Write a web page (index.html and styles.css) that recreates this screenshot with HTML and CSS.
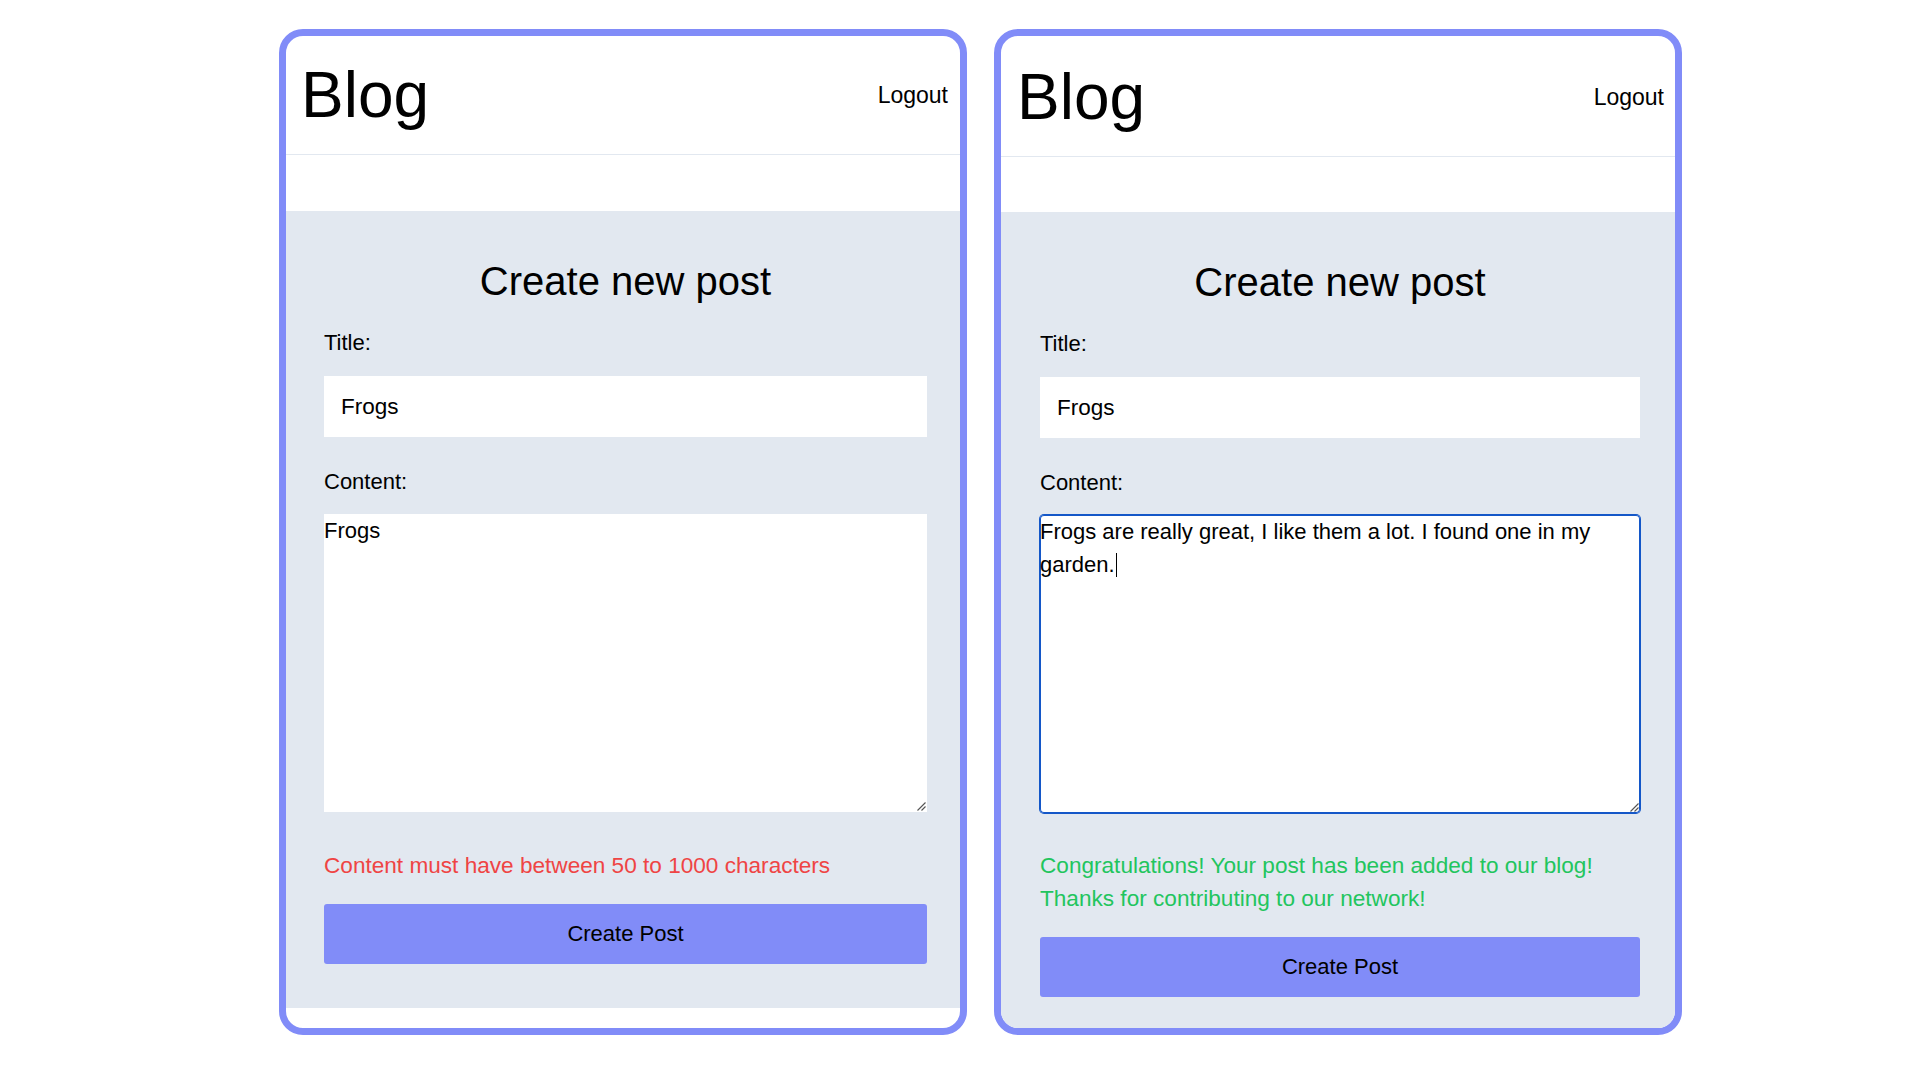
FILE: index.html
```html
<!DOCTYPE html>
<html lang="en">
<head>
<meta charset="utf-8">
<title>Blog - Create new post</title>
<link rel="stylesheet" href="styles.css">
</head>
<body>
<div class="stage">
  <section class="panel">
    <header class="header">
      <h1 class="brand">Blog</h1>
      <a class="logout" href="#">Logout</a>
    </header>
    <main class="main">
      <h2 class="heading">Create new post</h2>
      <form class="form">
        <label class="label">Title:</label>
        <input class="input" type="text" value="Frogs">
        <label class="label label-content">Content:</label>
        <div class="textarea">Frogs<svg class="grip" width="10" height="10" viewBox="0 0 10 10"><path d="M9.5 1.5 L1.5 9.5 M9.5 5.5 L5.5 9.5" stroke="#555" stroke-width="1.1" fill="none"/></svg></div>
        <p class="message message-error">Content must have between 50 to 1000 characters</p>
        <button class="button" type="button">Create Post</button>
      </form>
    </main>
  </section>

  <section class="panel panel-alt">
    <header class="header">
      <h1 class="brand">Blog</h1>
      <a class="logout" href="#">Logout</a>
    </header>
    <main class="main">
      <h2 class="heading">Create new post</h2>
      <form class="form">
        <label class="label">Title:</label>
        <input class="input" type="text" value="Frogs">
        <label class="label label-content">Content:</label>
        <div class="textarea textarea-focused">Frogs are really great, I like them a lot. I found one in my garden.<span class="caret"></span><svg class="grip" width="10" height="10" viewBox="0 0 10 10"><path d="M9.5 1.5 L1.5 9.5 M9.5 5.5 L5.5 9.5" stroke="#555" stroke-width="1.1" fill="none"/></svg></div>
        <p class="message message-success">Congratulations! Your post has been added to our blog! Thanks for contributing to our network!</p>
        <button class="button" type="button">Create Post</button>
      </form>
    </main>
  </section>
</div>
</body>
</html>
```

FILE: styles.css
```css
* {
  box-sizing: border-box;
}

html, body {
  margin: 0;
  padding: 0;
  background: #ffffff;
}

body {
  font-family: "Liberation Sans", Arial, Helvetica, sans-serif;
  color: #000000;
  width: 1920px;
  height: 1080px;
  overflow: hidden;
}

.stage {
  display: flex;
  gap: 27px;
  padding: 29px 0 0 279px;
}

.panel {
  width: 688px;
  height: 1006px;
  border: 7px solid #818cf8;
  border-radius: 24px;
  overflow: hidden;
  background: #ffffff;
  display: flex;
  flex-direction: column;
  flex-shrink: 0;
}

.header {
  height: 119px;
  flex-shrink: 0;
  display: flex;
  align-items: center;
  justify-content: space-between;
  padding: 0 12px 0 15px;
  border-bottom: 1px solid #e2e8f0;
}

.panel-alt .header {
  height: 121px;
  padding: 2px 11px 0 16px;
}

.panel-alt .main {
  margin-top: 55px;
  padding-left: 39px;
  padding-right: 35px;
}

.brand {
  margin: 0;
  font-size: 64px;
  line-height: 1;
  font-weight: 400;
}

.logout {
  font-size: 23px;
  line-height: 1;
  color: #000000;
  text-decoration: none;
}

.main {
  margin-top: 56px;
  flex-shrink: 0;
  background: #e2e8f0;
  padding: 40px 33px 44px 38px;
}

.heading {
  margin: 0 0 15px;
  font-size: 40px;
  line-height: 60px;
  font-weight: 400;
  text-align: center;
}

.form {
  display: flex;
  flex-direction: column;
  font-size: 22px;
  line-height: 33px;
}

.label {
  display: block;
  margin-bottom: 17px;
}

.label-content {
  margin-top: 28px;
  margin-bottom: 16px;
}

.input {
  display: block;
  width: 100%;
  height: 61px;
  border: none;
  border-radius: 0;
  background: #ffffff;
  padding: 0 17px;
  font-family: inherit;
  font-size: 22.5px;
  color: #000000;
  outline: none;
}

.textarea {
  position: relative;
  width: 100%;
  height: 298px;
  background: #ffffff;
  padding: 0;
  font-size: 22px;
  line-height: 33px;
  overflow: hidden;
}

.textarea-focused {
  border-radius: 4px;
  box-shadow: 0 0 0 1px #1457c8, inset 0 0 0 1px #1457c8;
}

.caret {
  display: inline-block;
  width: 0;
  height: 24px;
  border-left: 1.5px solid #000000;
  margin-left: 1px;
  vertical-align: -5px;
}

.grip {
  position: absolute;
  right: 1px;
  bottom: 1px;
}

.message {
  margin: 37px 0 0;
  font-size: 22.6px;
  line-height: 33px;
}

.message-error {
  color: #ef4444;
}

.message-success {
  color: #22c55e;
  line-height: 32.6px;
}

.button {
  margin-top: 22px;
  width: 100%;
  height: 60px;
  border: none;
  border-radius: 3px;
  background: #818cf8;
  font-family: inherit;
  font-size: 22px;
  color: #000000;
  cursor: pointer;
}
```
